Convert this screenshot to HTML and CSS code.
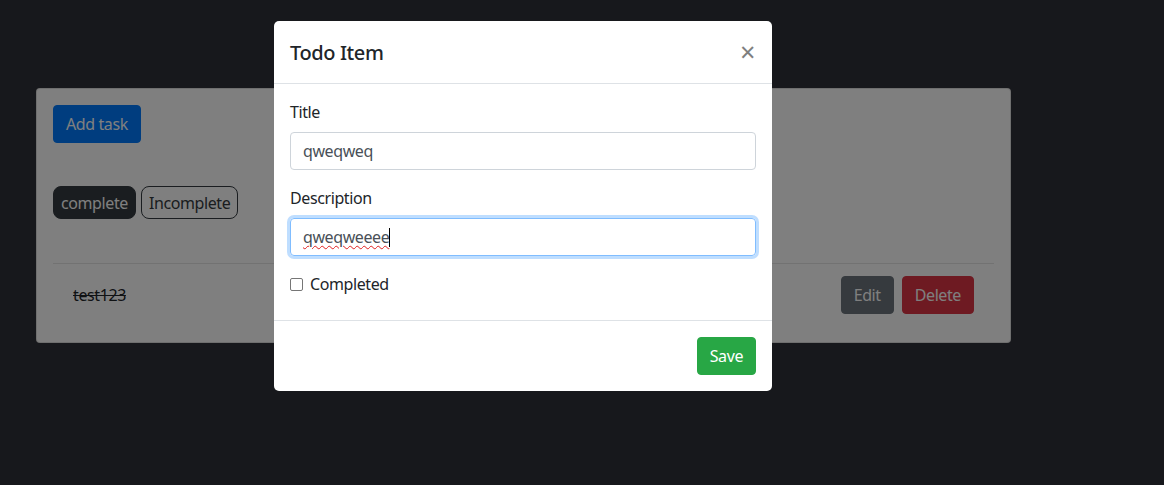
FILE: index.html
```html
<!DOCTYPE html>
<html lang="en">
<head>
<meta charset="utf-8">
<title>Todo</title>
<link rel="stylesheet" href="styles.css">
</head>
<body>
  <main class="page">
    <section class="card">
      <div class="toolbar">
        <button class="btn btn-primary">Add task</button>
      </div>
      <div class="filters">
        <button class="btn btn-sm btn-dark">complete</button>
        <button class="btn btn-sm btn-outline-dark">Incomplete</button>
      </div>
      <hr class="divider">
      <div class="task-row">
        <span class="task-title done">test123</span>
        <div class="task-actions">
          <button class="btn btn-secondary">Edit</button>
          <button class="btn btn-danger">Delete</button>
        </div>
      </div>
    </section>
  </main>

  <div class="backdrop"></div>

  <div class="modal">
    <div class="modal-header">
      <h5 class="modal-title">Todo Item</h5>
      <span class="close">&times;</span>
    </div>
    <div class="modal-body">
      <div class="form-group">
        <label class="form-label">Title</label>
        <div class="form-control">qweqweq</div>
      </div>
      <div class="form-group">
        <label class="form-label">Description</label>
        <div class="form-control focused"><span class="misspelled">qweqweeee</span><span class="caret"></span></div>
      </div>
      <label class="form-check">
        <span class="checkbox"></span>
        <span>Completed</span>
      </label>
    </div>
    <div class="modal-footer">
      <button class="btn btn-success">Save</button>
    </div>
  </div>
</body>
</html>
```

FILE: styles.css
```css
* { box-sizing: border-box; }

html, body {
  margin: 0;
  height: 100%;
}

body {
  background: #2f3038;
  font-family: "Noto Sans", "Open Sans", sans-serif;
  font-size: 16px;
  line-height: 1.5;
  letter-spacing: -0.4px;
  color: #212529;
  overflow: hidden;
}

.page {
  padding: 88px 0 0 36px;
}

.card {
  width: 975px;
  background: #fff;
  border: 1px solid rgba(0,0,0,.125);
  border-radius: 4px;
  padding: 16px;
}

.btn {
  display: inline-block;
  font-family: inherit;
  font-size: 16px;
  letter-spacing: inherit;
  line-height: 24px;
  padding: 6px 12px;
  border: 1px solid transparent;
  border-radius: 4px;
  color: #fff;
  background: none;
}

.btn-sm {
  padding: 4px 7px 3px;
  border-radius: 8px;
}

.btn-primary { background: #007bff; border-color: #007bff; }
.btn-secondary { background: #6c757d; border-color: #6c757d; }
.btn-danger { background: #dc3545; border-color: #dc3545; }
.btn-success { background: #28a745; border-color: #28a745; }
.btn-dark { background: #343a40; border-color: #343a40; }
.btn-outline-dark { color: #343a40; border-color: #343a40; }

.filters {
  display: flex;
  gap: 5px;
  margin-top: 43px;
}

.divider {
  margin: 44px 0 0;
  border: 0;
  border-top: 1px solid rgba(0,0,0,.1);
}

.task-row {
  display: flex;
  align-items: center;
  justify-content: space-between;
  padding: 12px 20px 12px 20px;
}

.task-title.done {
  text-decoration: line-through;
}

.task-actions {
  display: flex;
  gap: 8px;
}

.backdrop {
  position: fixed;
  inset: 0;
  background: rgba(0,0,0,.5);
}

.modal {
  position: absolute;
  left: 274px;
  top: 21px;
  width: 498px;
  background: #fff;
  border-radius: 5px;
}

.modal-header {
  display: flex;
  align-items: center;
  justify-content: space-between;
  padding: 17px 16px 15px;
  border-bottom: 1px solid #dee2e6;
}

.modal-title {
  margin: 0;
  font-size: 20px;
  font-weight: 500;
  line-height: 30px;
}

.close {
  font-size: 27px;
  font-weight: 400;
  line-height: 1;
  color: #000;
  opacity: .5;
  margin-right: 1px;
  margin-top: -3px;
}

.modal-body {
  padding: 16px;
}

.form-group {
  margin-bottom: 16px;
}

.form-label {
  display: block;
  margin-bottom: 8px;
}

.form-control {
  height: 38px;
  padding: 6px 12px;
  border: 1px solid #ced4da;
  border-radius: 4px;
  color: #495057;
  display: flex;
  align-items: center;
}

.form-control.focused {
  border-color: #80bdff;
  box-shadow: 0 0 0 3px rgba(0,123,255,.25);
}

.misspelled {
  text-decoration: underline wavy #e02020;
  text-decoration-thickness: 1px;
  text-underline-offset: 2px;
}

.caret {
  display: inline-block;
  width: 1px;
  height: 19px;
  background: #000;
}

.form-check {
  display: flex;
  align-items: center;
  gap: 7px;
  margin-bottom: 8px;
}

.checkbox {
  width: 13px;
  height: 13px;
  border: 1px solid #767676;
  border-radius: 2px;
  background: #fff;
}

.modal-footer {
  display: flex;
  justify-content: flex-end;
  padding: 16px;
  border-top: 1px solid #dee2e6;
}
```
